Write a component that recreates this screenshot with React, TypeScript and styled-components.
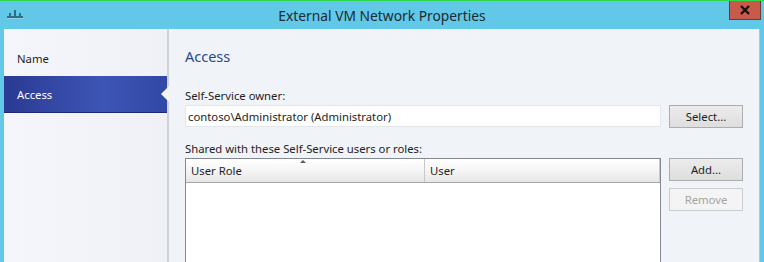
import styled, { createGlobalStyle } from "styled-components";

const GlobalStyle = createGlobalStyle`
  html, body {
    margin: 0;
    padding: 0;
    width: 764px;
    height: 262px;
    overflow: hidden;
  }
  body {
    font-family: "Noto Sans", "Open Sans", sans-serif;
    font-size: 11.3px;
    color: #1e1e1e;
  }
`;

const navItems = ["Name", "Access"];

export default function App() {
  return (
    <>
      <GlobalStyle />
      <Window>
        <TitleBar>
          <AppIcon width="18" height="10" viewBox="0 0 18 10">
            <rect x="1" y="6" width="16" height="2" fill="#2f6f8a" />
            <rect x="3" y="3" width="2" height="3" fill="#2f6f8a" />
            <rect x="8" y="0" width="2" height="6" fill="#2f6f8a" />
            <rect x="13" y="3" width="2" height="3" fill="#2f6f8a" />
            <rect x="1" y="8" width="16" height="1" fill="#8fd3ea" />
          </AppIcon>
          <Title>External VM Network Properties</Title>
          <CloseButton>
            <svg width="10" height="10" viewBox="0 0 10 10">
              <path d="M1 1 L9 9 M9 1 L1 9" stroke="#1a0f0f" strokeWidth="2.4" />
            </svg>
          </CloseButton>
        </TitleBar>
        <Body>
          <Nav>
            {navItems.map((item) => (
              <NavItem key={item} $active={item === "Access"}>
                {item}
                {item === "Access" && <Pointer />}
              </NavItem>
            ))}
          </Nav>
          <Main>
            <Heading>Access</Heading>
            <FieldLabel>Self-Service owner:</FieldLabel>
            <Row>
              <TextBox>contoso\Administrator (Administrator)</TextBox>
              <Buttons>
                <Button>Select...</Button>
              </Buttons>
            </Row>
            <FieldLabel $spaced>Shared with these Self-Service users or roles:</FieldLabel>
            <Row>
              <Grid>
                <GridHeader>
                  <HeaderCell $width={239}>
                    User Role
                    <SortArrow />
                  </HeaderCell>
                  <HeaderCell>User</HeaderCell>
                </GridHeader>
              </Grid>
              <Buttons>
                <Button>Add...</Button>
                <Button disabled>Remove</Button>
              </Buttons>
            </Row>
          </Main>
        </Body>
      </Window>
    </>
  );
}

const Window = styled.div`
  width: 764px;
  height: 262px;
  display: flex;
  flex-direction: column;
  background: #62c8e8;
  border-top: 1px solid #2fd84a;
  box-sizing: border-box;
  overflow: hidden;
`;

const TitleBar = styled.div`
  height: 28px;
  flex: none;
  display: flex;
  align-items: flex-start;
  position: relative;
`;

const AppIcon = styled.svg`
  margin: 9px 0 0 6px;
`;

const Title = styled.div`
  position: absolute;
  left: 0;
  right: 0;
  top: 5px;
  text-align: center;
  font-family: "Noto Sans", sans-serif;
  font-size: 13.8px;
  color: #1b2a33;
`;

const CloseButton = styled.div`
  position: absolute;
  top: 0;
  right: 3px;
  width: 32px;
  height: 19px;
  box-sizing: border-box;
  background: #c85a4c;
  border: 1px solid #6b3a35;
  border-top: none;
  display: flex;
  align-items: center;
  justify-content: center;
`;

const Body = styled.div`
  flex: 1;
  display: flex;
  margin: 0 4px 0 4px;
  border-right: 1px solid #b9c4cc;
  min-height: 0;
`;

const Nav = styled.div`
  width: 163px;
  flex: none;
  background: linear-gradient(90deg, #f5f6fb, #f0f1f7);
  padding-top: 11px;
  border-right: 2px solid #cfd2d8;
  box-shadow: 1px 0 0 #e4e6ea;
`;

const NavItem = styled.div<{ $active?: boolean }>`
  position: relative;
  height: 36px;
  display: flex;
  align-items: center;
  padding-left: 13px;
  font-size: 11.3px;
  color: ${(p) => (p.$active ? "#ffffff" : "#1e1e1e")};
  background: ${(p) =>
    p.$active
      ? "linear-gradient(90deg, #2b3a92 0%, #3d55b5 60%, #3248a6 100%)"
      : "transparent"};
  border-bottom: ${(p) => (p.$active ? "1px solid #1d2a72" : "none")};
`;

const Pointer = styled.span`
  position: absolute;
  right: -2px;
  top: 10px;
  width: 0;
  height: 0;
  border-top: 8px solid transparent;
  border-bottom: 8px solid transparent;
  border-right: 8px solid #f2f4f8;
`;

const Main = styled.div`
  flex: 1;
  background: #f0f3f7;
  padding: 17px 16px 0 16px;
`;

const Heading = styled.div`
  font-size: 14.5px;
  color: #274a8f;
  margin-bottom: 21px;
`;

const FieldLabel = styled.div<{ $spaced?: boolean }>`
  font-size: 11.3px;
  color: #1e1e1e;
  margin-top: ${(p) => (p.$spaced ? "12px" : "0")};
  margin-bottom: 1px;
  line-height: 17px;
`;

const Row = styled.div`
  display: flex;
  gap: 8px;
  align-items: flex-start;
`;

const TextBox = styled.div`
  width: 476px;
  height: 22px;
  box-sizing: border-box;
  background: #ffffff;
  border: 1px solid #e2e7ec;
  padding: 0 2px;
  display: flex;
  align-items: center;
  font-size: 11.3px;
`;

const Buttons = styled.div`
  display: flex;
  flex-direction: column;
  gap: 7px;
`;

const Button = styled.button`
  width: 74px;
  height: 23px;
  box-sizing: border-box;
  font-family: "Noto Sans", sans-serif;
  font-size: 11.3px;
  color: #1e1e1e;
  background: linear-gradient(#ececec, #dedede);
  border: 1px solid #adadad;
  padding: 0;

  &:disabled {
    color: #a3a3a3;
    background: #f4f4f4;
    border-color: #c9cdd0;
  }
`;

const Grid = styled.div`
  width: 476px;
  height: 120px;
  box-sizing: border-box;
  background: #ffffff;
  border: 1px solid #828790;
`;

const GridHeader = styled.div`
  display: flex;
  height: 23px;
  background: linear-gradient(#ffffff 0%, #f6f6f6 45%, #e6e6e6 100%);
  border-bottom: 1px solid #a6a6a6;
`;

const HeaderCell = styled.div<{ $width?: number }>`
  position: relative;
  width: ${(p) => (p.$width ? `${p.$width}px` : "auto")};
  flex: ${(p) => (p.$width ? "none" : "1")};
  box-sizing: border-box;
  padding-left: 5px;
  display: flex;
  align-items: center;
  font-size: 11.3px;
  border-right: 1px solid #c8c8c8;
`;

const SortArrow = styled.span`
  position: absolute;
  top: 1px;
  left: 114px;
  width: 0;
  height: 0;
  border-left: 3px solid transparent;
  border-right: 3px solid transparent;
  border-bottom: 3px solid #5a5a5a;
`;
